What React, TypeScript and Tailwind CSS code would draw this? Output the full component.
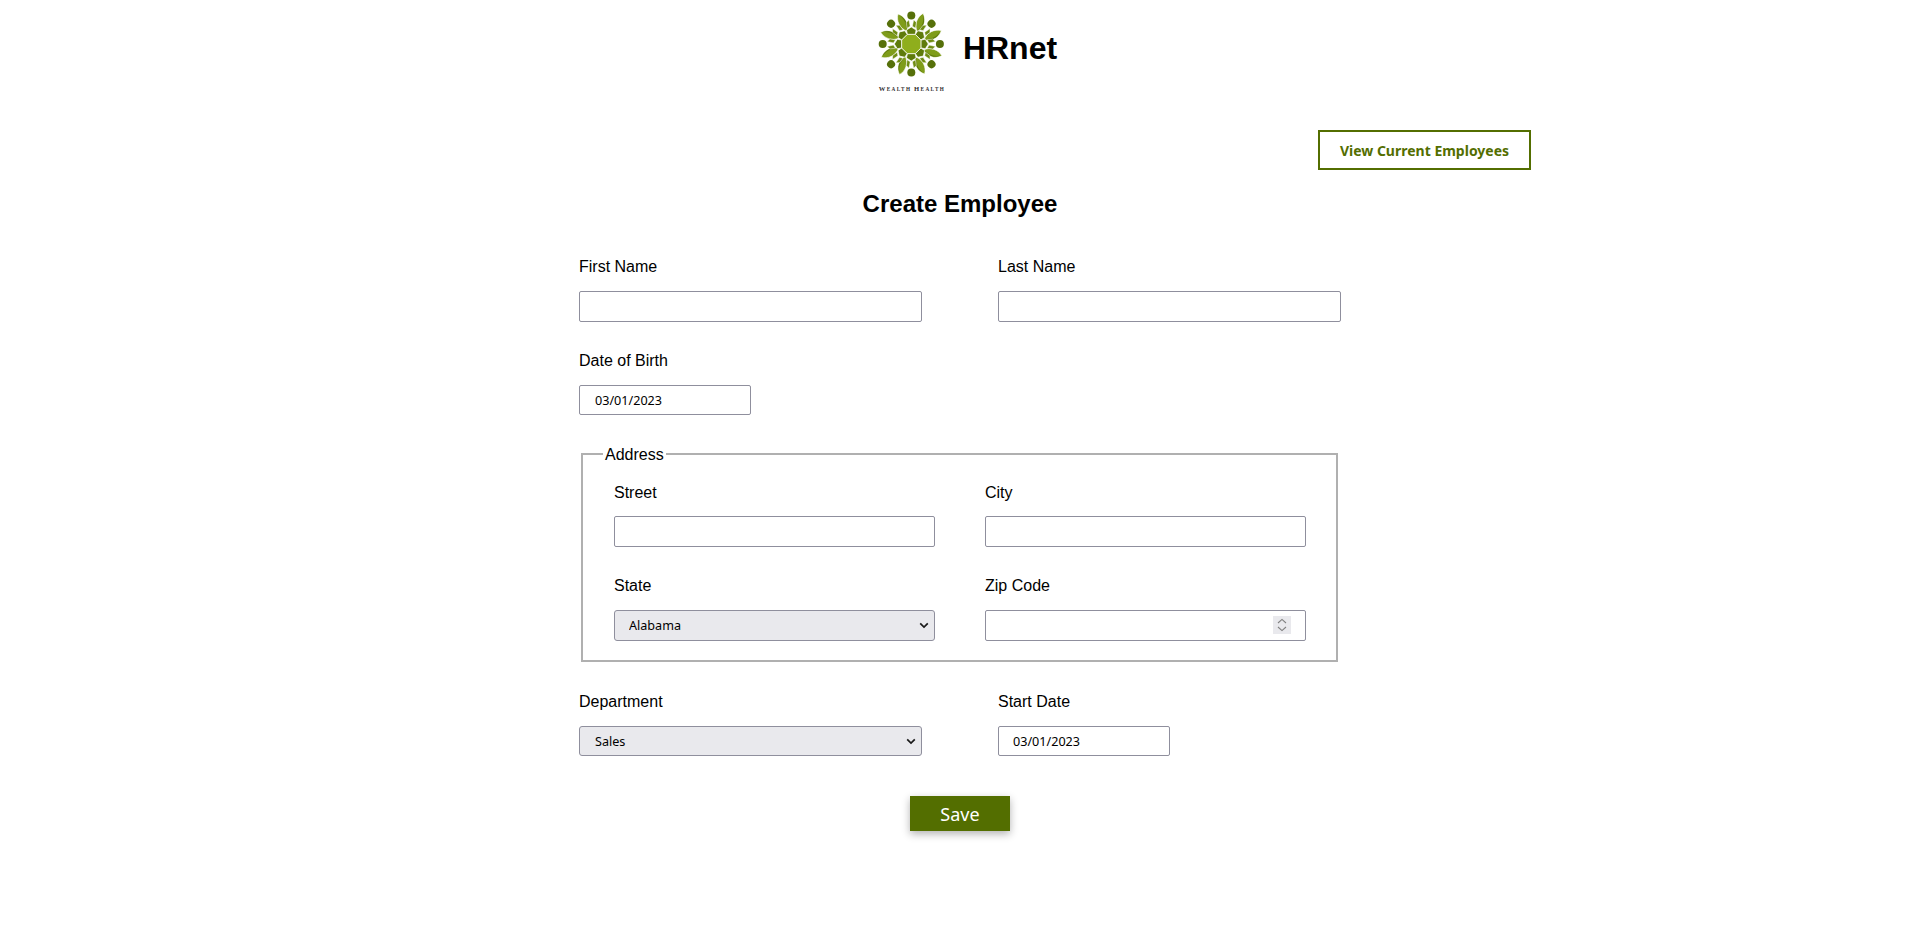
import React from 'react';

const labelClass = 'block h-[19px] leading-[20px] text-base text-black mb-[15px]';
const addressLabelClass = 'block h-[19px] leading-[20px] text-base text-black mb-[14px]';
const stateLabelClass = 'block h-[19px] leading-[20px] text-base text-black mb-[15px]';
const fieldClass =
  'block box-border border border-[#8f8f9d] rounded-[2px] bg-white pr-[15px] text-[12.6px] text-black font-["Noto_Sans",sans-serif] outline-none';
const selectClass =
  'block box-border appearance-none border border-[#8f8f9d] rounded-[3px] bg-[#e9e9ed] pr-[4px] pt-[2px] text-[12.6px] text-black font-["Noto_Sans",sans-serif] outline-none';

const angles = [0, 45, 90, 135, 180, 225, 270, 315];

// Logo is a drawing: eight-fold rosette around an octagon
const Logo = () => (
  <svg width="72" height="85" viewBox="0 0 72 85" className="block shrink-0">
    <g transform="translate(36.3 35)">
      {angles.map(a => (
        <g key={a} transform={`rotate(${a + 22.5})`}>
          <path d="M1 -13.6 C-5 -18.6 -5 -27.5 -0.8 -32.8 C5 -27.5 5.4 -19 1 -13.6 Z" fill="#7f9c1a" stroke="#fff" strokeWidth="0.5" />
          <path d="M0.9 -15 C3.4 -20 3.2 -26.5 -0.6 -31.6 C4.6 -27 5 -19.6 0.9 -15 Z" fill="#5f7b0c" />
        </g>
      ))}
      {angles.map(a => (
        <g key={a} transform={`rotate(${a})`}>
          <circle cx="0" cy="-28.6" r="4" fill="#56700a" />
          <path d="M-1.1 -17.8 L-4.2 -15.8 L-5 -21.4 L-2.4 -24.2 Z M1.1 -17.8 L4.2 -15.8 L5 -21.4 L2.4 -24.2 Z" fill="#6f8c12" stroke="#fff" strokeWidth="0.5" />
          <path d="M-3.9 -9.6 L3.9 -9.6 L4.8 -14 L0 -17 L-4.8 -14 Z" fill="#5f7b0c" stroke="#fff" strokeWidth="0.7" />
        </g>
      ))}
      <polygon points="-4,-9.6 4,-9.6 9.6,-4 9.6,4 4,9.6 -4,9.6 -9.6,4 -9.6,-4" fill="#8fae1c" stroke="#fff" strokeWidth="0.7" />
    </g>
    <text x="36.3" y="81.5" textAnchor="middle" textLength="65" lengthAdjust="spacing" fontWeight="700" fill="#2e2e2e" fontFamily="'Liberation Serif', serif" fontSize="5.2">
      <tspan fontSize="6.6">W</tspan>EALTH <tspan fontSize="6.6">H</tspan>EALTH
    </text>
  </svg>
);

const Chevron = () => (
  <svg width="10" height="7" viewBox="0 0 10 7" fill="none" stroke="#1a1a1a" strokeWidth="1.7" className="absolute right-[6px] top-[12px] pointer-events-none">
    <path d="M1.2 1.3 L5 5 L8.8 1.3" />
  </svg>
);

const App: React.FC = () => {
  return (
    <div className="min-h-[947px] bg-white font-['Liberation_Sans',Arial,sans-serif] text-black">
      {/* Header */}
      <header className="flex items-center justify-center h-[100px] pl-[12px] pt-[2px]">
        <Logo />
        <h1 className="ml-[16px] mb-[5px] text-[32px] leading-[37px] font-bold">HRnet</h1>
      </header>

      {/* Nav */}
      <div className="flex justify-end pr-[389px] mt-[30px]">
        <a className="flex items-center justify-center w-[213px] h-[40px] border-2 border-[#536e00] text-[#536e00] text-[14px] font-bold font-['Noto_Sans',sans-serif]">
          View Current Employees
        </a>
      </div>

      <h2 className="mt-[20px] text-center text-[24px] leading-[28px] font-bold">Create Employee</h2>

      <form className="w-[762px] mx-auto mt-[39px]">
        <div className="flex gap-[76px]">
          <div>
            <label className={labelClass}>First Name</label>
            <input type="text" className={`${fieldClass} pl-[15px] w-[343px] h-[31px]`} />
          </div>
          <div>
            <label className={labelClass}>Last Name</label>
            <input type="text" className={`${fieldClass} pl-[15px] w-[343px] h-[31px]`} />
          </div>
        </div>

        <div className="mt-[29px]">
          <label className={labelClass}>Date of Birth</label>
          <input type="text" defaultValue="03/01/2023" className={`${fieldClass} pl-[15px] w-[172px] h-[30px]`} />
        </div>

        <fieldset className="w-[757px] ml-[2px] mt-[29px] h-[218px] border-2 border-[#b0b0b0] pl-[31px] pr-[30px]">
          <legend className="ml-[-11px] px-[2px] pt-[2px] text-base leading-[18px]">Address</legend>
          <div className="grid grid-cols-[321px_321px] gap-x-[50px] gap-y-[29px] mt-[19px]">
            <div>
              <label className={addressLabelClass}>Street</label>
              <input type="text" className={`${fieldClass} pl-[15px] w-[321px] h-[31px]`} />
            </div>
            <div>
              <label className={addressLabelClass}>City</label>
              <input type="text" className={`${fieldClass} pl-[15px] w-[321px] h-[31px]`} />
            </div>
            <div>
              <label className={stateLabelClass}>State</label>
              <div className="relative w-[321px]">
                <select className={`${selectClass} pl-[14px] w-[321px] h-[31px]`}>
                  <option>Alabama</option>
                </select>
                <Chevron />
              </div>
            </div>
            <div>
              <label className={stateLabelClass}>Zip Code</label>
              <div className="relative w-[321px]">
                <input type="text" className={`${fieldClass} pl-[15px] w-[321px] h-[31px]`} />
                {/* spinner shown over the input */}
                <div className="absolute right-[15px] top-[6px] w-[18px] h-[18px] bg-[#e9e9ed] flex flex-col items-center justify-center">
                  <svg width="10" height="16" viewBox="0 0 10 16" fill="none" stroke="#808080" strokeWidth="1.1">
                    <path d="M1 6 L5 2.4 L9 6" />
                    <path d="M1 10 L5 13.6 L9 10" />
                  </svg>
                </div>
              </div>
            </div>
          </div>
        </fieldset>

        <div className="flex gap-[76px] mt-[30px]">
          <div>
            <label className={labelClass}>Department</label>
            <div className="relative w-[343px]">
              <select className={`${selectClass} pl-[15px] w-[343px] h-[30px]`}>
                <option>Sales</option>
              </select>
              <Chevron />
            </div>
          </div>
          <div>
            <label className={labelClass}>Start Date</label>
            <input type="text" defaultValue="03/01/2023" className={`${fieldClass} pl-[14px] w-[172px] h-[30px]`} />
          </div>
        </div>

        <div className="flex justify-center mt-[40px]">
          <button type="button" className="w-[100px] h-[35px] pt-[2px] bg-[#536e00] text-white text-[18px] font-['Noto_Sans',sans-serif] shadow-[0_3px_8px_rgba(0,0,0,0.3)]">
            Save
          </button>
        </div>
      </form>
    </div>
  );
};

export default App;
